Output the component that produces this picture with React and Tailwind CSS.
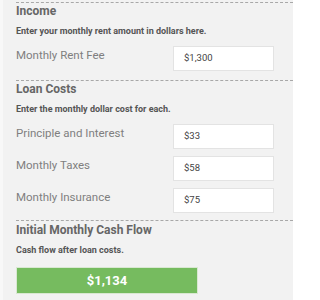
import React from "react";

function Row({ label, value, first }) {
  return (
    <div className={`flex items-start ${first ? "mt-[8px]" : "mt-[7px]"}`}>
      <div className="w-[157px] pt-[1px] text-[11.5px] leading-[16px] text-[#7f7f7f]">{label}</div>
      <div className="w-[101px] h-[25px] border border-[#e3e3e3] bg-white pl-[10px] flex items-center text-[9.5px] text-[#444]">
        {value}
      </div>
    </div>
  );
}

function Section({ title, subtitle, children, cls }) {
  return (
    <section className={`border-t border-dashed border-[#a8a8a8] ${cls}`}>
      <h2 className="text-[12px] leading-[16px] font-bold text-[#666]">{title}</h2>
      <p className="mt-[5px] text-[9px] leading-[14px] font-bold text-[#555]">{subtitle}</p>
      {children}
    </section>
  );
}

export default function App() {
  return (
    <div
      className="w-[293px] h-[300px] bg-[#f8f8f8] overflow-hidden"
      style={{ fontFamily: "Roboto, 'Liberation Sans', sans-serif" }}
    >
      <div className="ml-[3px] h-full bg-[#f2f2f2] pt-[2px] pl-[13px]">
        <Section title="Income" subtitle="Enter your monthly rent amount in dollars here." cls="pb-[9px]">
          <Row label="Monthly Rent Fee" value="$1,300" first />
        </Section>
        <Section title="Loan Costs" subtitle="Enter the monthly dollar cost for each." cls="pb-[7px]">
          <Row label="Principle and Interest" value="$33" first />
          <Row label="Monthly Taxes" value="$58" />
          <Row label="Monthly Insurance" value="$75" />
        </Section>
        <Section title="Initial Monthly Cash Flow" subtitle="Cash flow after loan costs." cls="pt-[1px] pb-[6px]">
          <div className="mt-[10px] w-[182px] h-[27px] bg-[#76bb5f] border border-[#d9e8d2] flex items-center justify-center text-[13px] font-bold text-white">
            $1,134
          </div>
        </Section>
      </div>
    </div>
  );
}
